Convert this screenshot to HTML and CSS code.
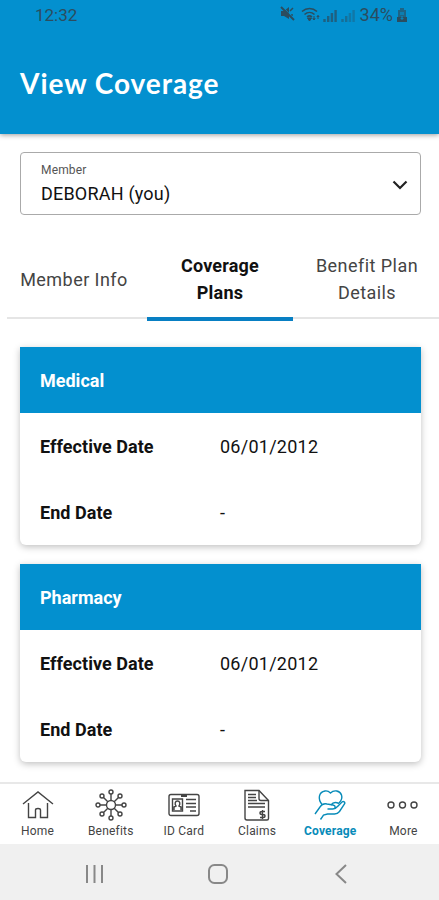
FILE: index.html
```html
<!DOCTYPE html>
<html lang="en">
<head>
<meta charset="utf-8">
<title>View Coverage</title>
<link rel="stylesheet" href="styles.css">
</head>
<body>
<div class="screen">
  <header class="header">
    <div class="status">
      <span class="clock">12:32</span>
      <div class="indicators">
        <svg class="mute" width="15" height="15" viewBox="0 0 15 15"><path d="M1 5h3l5-4v12l-5-3H1z" fill="currentColor"/><path d="M10 5l3-3M11 9h2" stroke="currentColor" stroke-width="1.5"/><path d="M3 1l12 13" stroke="#0390cf" stroke-width="1"/><path d="M1 1l13 13" stroke="currentColor" stroke-width="2"/></svg>
        <svg class="wifi" width="20" height="15" viewBox="0 0 20 15" fill="none" stroke="currentColor" stroke-width="1.6"><path d="M1 4.500c4.500-4 10.500-4 15 0M3.500 7.500c3-2.700 7-2.700 10 0M6 10c1.500-1.400 3.500-1.400 5 0"/><path d="M6.500 11h4l-2 3zM13 9v3.500M17 8.500V12M11.800 11.500l1.200 1.500 1.200-1.500M15.800 10l1.200-1.500 1.200 1.500" fill="currentColor" stroke-width="1"/></svg>
        <svg class="signal" width="14" height="13" viewBox="0 0 14 13" stroke="currentColor" stroke-width="2.400"><path d="M1.500 13v-3M5.200 13V7M8.900 13V4M12.600 13V1"/></svg>
        <svg class="signal faint" width="14" height="13" viewBox="0 0 14 13" stroke="currentColor" stroke-width="2.400"><path d="M1.500 13v-3M5.200 13V7"/><path d="M8.900 13V4M12.600 13V1" opacity=".7"/></svg>
        <span class="percent">34%</span>
        <svg class="battery" width="10" height="14" viewBox="0 0 10 14"><path d="M3 0h4v2h2v12H1V2h2z" fill="currentColor" opacity=".65"/><path d="M3 4h4v3H3z" fill="#0390cf" opacity=".6"/><path d="M0 9h10v5H0z" fill="currentColor"/><path d="M5 8v3M3.700 10L5 11.500 6.300 10" stroke="#0390cf" fill="none"/></svg>
      </div>
    </div>
    <h1 class="title">View Coverage</h1>
  </header>

  <main class="content">
    <div class="select">
      <div>
        <div class="select-label">Member</div>
        <div class="select-value">DEBORAH (you)</div>
      </div>
      <svg width="16" height="10" viewBox="0 0 16 10" fill="none" stroke="#222" stroke-width="2.200"><path d="M1.500 1.500L8 8l6.500-6.500"/></svg>
    </div>

    <nav class="tabs">
      <div class="tab"><span>Member Info</span></div>
      <div class="tab selected"><span>Coverage<br>Plans</span></div>
      <div class="tab"><span>Benefit Plan<br>Details</span></div>
    </nav>

    <section class="card">
      <h2 class="card-title">Medical</h2>
      <div class="row"><b>Effective Date</b><span>06/01/2012</span></div>
      <div class="row"><b>End Date</b><span>-</span></div>
    </section>
    <section class="card">
      <h2 class="card-title">Pharmacy</h2>
      <div class="row"><b>Effective Date</b><span>06/01/2012</span></div>
      <div class="row"><b>End Date</b><span>-</span></div>
    </section>
  </main>

  <nav class="bottom">
    <div class="item">
      <svg width="32" height="32" viewBox="0 0 32 32"><path d="M1 15L16 3l15 12M6.500 14v14.500h7V21q0-1.500 2.500-1.500t2.500 1.500v7.500h7V14"/></svg>
      <span>Home</span>
    </div>
    <div class="item">
      <svg width="32" height="32" viewBox="0 0 32 32"><circle cx="16" cy="16" r="4.500"/><path d="M16 11.500V5M16 20.500V27M11.500 16H5M20.500 16H27M12.800 12.800L8.500 8.500M19.200 12.800l4.300-4.300M12.800 19.200l-4.300 4.300M19.200 19.200l4.300 4.300"/><circle cx="16" cy="3" r="2"/><circle cx="16" cy="29" r="2"/><circle cx="3" cy="16" r="2"/><circle cx="29" cy="16" r="2"/><circle cx="7" cy="7" r="2"/><circle cx="25" cy="7" r="2"/><circle cx="7" cy="25" r="2"/><circle cx="25" cy="25" r="2"/></svg>
      <span>Benefits</span>
    </div>
    <div class="item">
      <svg width="32" height="32" viewBox="0 0 32 32"><rect x="1" y="5.500" width="30" height="21" rx="2"/><path d="M13 6.500h6" stroke-width="3"/><path d="M4.500 10h10v12h-10zM6 21v-3l2-1c-1.500-2-1-5 1.500-5s3 3 1.500 5l2 1v3M18 10.500h10M18 14.500h10M18 18h10M22 22h6"/></svg>
      <span>ID Card</span>
    </div>
    <div class="item">
      <svg width="32" height="32" viewBox="0 0 32 32"><path d="M4 1.500h14l9.500 10v18q0 1.500-1.500 1.500H6q-2 0-2-2z"/><path d="M18 1.500v8q0 2 2 2h7.500M7 5.500h8M7 8.500h8M7 11.500h9M7 14.500h17M7 18h17"/><path d="M24 22.500h-3q-2 0-2 1.500t2 1.500h1q2 0 2 1.500t-2 1.500h-3M21.500 21v9" stroke-width="1.400"/></svg>
      <span>Claims</span>
    </div>
    <div class="item active">
      <svg width="32" height="32" viewBox="0 0 32 32"><path d="M8.500 16C3 10 5 3 11 2c2.500-.4 4 .5 5.500 2C20 .5 26 1.500 27.500 6c1 3-.5 6-2.500 8"/><path d="M1 25l5-7q2.500-4 7-3l6 1c3 .7 3 4-.5 4h-5 5.500c3 0 4.500-2.500 6.500-4.500l2.500-2.500c1.500-1.200 3.500.2 2.500 2l-5 7.500q-2 2.500-5 2.500h-7l-4 1-3 4.500"/><path d="M17 16c2-3 5-3 8-1.500"/></svg>
      <span>Coverage</span>
    </div>
    <div class="item">
      <svg width="32" height="32" viewBox="0 0 32 32"><circle cx="4" cy="16" r="3"/><circle cx="15.500" cy="16" r="3"/><circle cx="27" cy="16" r="3"/></svg>
      <span>More</span>
    </div>
  </nav>

  <footer class="system">
    <svg width="20" height="20" viewBox="0 0 20 20"><path d="M2 1v18M9.500 1v18M17 1v18"/></svg>
    <svg width="20" height="20" viewBox="0 0 20 20"><rect x="1" y="1" width="18" height="18" rx="5.500"/></svg>
    <svg width="20" height="20" viewBox="0 0 20 20"><path d="M15 1L5.500 10l9.500 9"/></svg>
  </footer>
</div>
</body>
</html>
```
FILE: styles.css
```css
* { box-sizing: border-box; }
body { margin: 0; font-family: Roboto, sans-serif; color: #111; background: #fff; }
.screen { width: 439px; height: 900px; display: flex; flex-direction: column; overflow: hidden; }
.header { height: 134px; flex: none; background: #0390cf; box-shadow: 0 1px 5px rgba(0,0,0,.4); }
.status { height: 30px; padding: 0 32px 0 35px; display: flex; justify-content: space-between; align-items: center; color: #2b4d5f; font-size: 17px; line-height: 30px; }
.indicators { display: flex; align-items: center; height: 28px; }
.mute { margin-top: -3px; }
.wifi { margin-left: 6px; margin-top: -1px; }
.signal { margin-left: 2px; opacity: .7; }
.signal + .signal { margin-left: 4px; }
.signal.faint { opacity: .5; }
.percent { margin: -1px 4px 0 5px; font-size: 18px; }
.battery { margin-top: -1px; }
.title { margin: 32px 0 0 20px; font: 700 28px/42px Lato, sans-serif; letter-spacing: .95px; color: #fff; }
.content { height: 648px; flex: none; padding-top: 18px; overflow: hidden; }
.select { width: 401px; height: 63px; margin-left: 20px; border: 1.500px solid #aaa; border-radius: 4px; padding: 10px 12px 0 20px; display: flex; justify-content: space-between; }
.select svg { margin-top: 17px; }
.select-label { font-size: 12px; line-height: 15px; letter-spacing: .15px; color: #555; }
.select-value { font-size: 18px; line-height: 32px; letter-spacing: .2px; }
.tabs { margin: 28px 0 0 7px; height: 78px; display: grid; grid-template-columns: 140px 146px 146px; }
.tab { display: flex; align-items: center; justify-content: center; text-align: center; border-bottom: 2px solid #e5e5e5; height: 76px; padding-bottom: 2px; font-size: 18px; line-height: 27px; letter-spacing: .45px; color: #444; }
.tab:first-child { padding-right: 6px; }
.tab:last-child { padding-left: 2px; }
.tab.selected { height: 78px; border-bottom: 4px solid #087fc3; font-weight: 700; letter-spacing: .2px; color: #111; }
.card { width: 401px; height: 198px; margin: 26px 0 0 20px; border-radius: 0 0 6px 6px; box-shadow: 0 2px 7px rgba(0,0,0,.25); }
.card + .card { margin-top: 19px; }
.card-title { height: 66px; margin: 0; padding-left: 20px; background: #0390cf; color: #fff; font-size: 18px; line-height: 68px; font-weight: 700; }
.row { display: grid; grid-template-columns: 180px 1fr; padding-left: 20px; height: 66px; font-size: 18px; line-height: 68px; }
.row span { letter-spacing: .25px; }
.row b { letter-spacing: .05px; }
.bottom { height: 62px; flex: none; border-top: 2px solid #e8e8e8; display: grid; grid-template-columns: repeat(6, 1fr); padding-left: 1px; margin-right: -1px; background: #fff; }
.item { display: flex; flex-direction: column; align-items: center; padding-top: 5px; color: #444; font-size: 12px; line-height: 20px; letter-spacing: .2px; }
.item svg { fill: none; stroke: currentColor; stroke-width: 1.400; }
.item.active { color: #078bb9; font-weight: 700; }
.system { flex: 1; background: #f0f0f0; display: flex; align-items: center; padding: 3px 0 0 85px; gap: 103px; }
.system svg { fill: none; stroke: #888; stroke-width: 2; }
```
